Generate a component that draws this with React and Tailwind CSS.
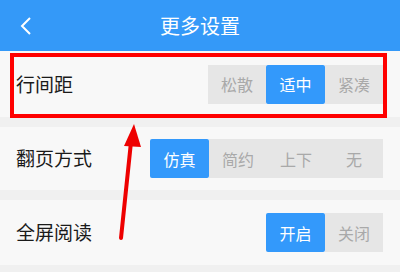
import React from "react";

const font = { fontFamily: '"Noto Sans CJK SC", "Noto Sans", sans-serif' };

function Seg({ items, active }) {
  return (
    <div className="flex">
      {items.map((t, i) => (
        <div
          key={t}
          className={
            i === active
              ? "w-[59px] h-[39px] flex items-center justify-center bg-[#3399fb] text-white text-[16px] rounded-[2px]"
              : "w-[58px] h-[39px] flex items-center justify-center bg-[#e6e6e6] text-[#a9a9a9] text-[16px]"
          }
        >
          {t}
        </div>
      ))}
    </div>
  );
}

function Row({ label, h, items, active }) {
  return (
    <div className={`${h} bg-[#f8f8f8] flex items-center justify-between pl-[16px] pr-[17px]`}>
      <span className="text-[19px] text-[#1a1a1a]">{label}</span>
      <Seg items={items} active={active} />
    </div>
  );
}

export default function App() {
  return (
    <div className="w-[400px] h-[272px] bg-[#f0f0f0] relative overflow-hidden" style={font}>
      <div className="h-[51px] bg-[#3499f8] flex items-center justify-center relative">
        <svg className="absolute left-[18px] top-[16px]" width="16" height="20" viewBox="0 0 16 20">
          <path d="M12 2 L4 10 L12 18" fill="none" stroke="white" strokeWidth="2" />
        </svg>
        <span className="text-white text-[20px]">更多设置</span>
      </div>
      <div className="flex flex-col gap-[10px]">
        <Row label="行间距" h="h-[66px]" items={["松散", "适中", "紧凑"]} active={1} />
        <Row label="翻页方式" h="h-[63px]" items={["仿真", "简约", "上下", "无"]} active={0} />
        <Row label="全屏阅读" h="h-[65px]" items={["开启", "关闭"]} active={0} />
      </div>
      <div className="absolute left-[10px] top-[53px] w-[377px] h-[65px] border-[4px] border-[#ff0000]" />
      <svg className="absolute left-0 top-0" width="400" height="272" viewBox="0 0 400 272">
        <line x1="121" y1="238" x2="131" y2="142" stroke="#ee0000" strokeWidth="4" strokeLinecap="round" />
        <polygon points="134,124 124,146 141,147" fill="#ee0000" />
      </svg>
    </div>
  );
}
